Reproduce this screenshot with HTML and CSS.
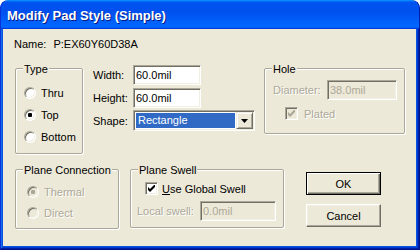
FILE: index.html
```html
<!DOCTYPE html>
<html>
<head>
<meta charset="utf-8">
<title>Modify Pad Style (Simple)</title>
<link rel="stylesheet" href="styles.css">
</head>
<body>
<div class="window">
  <div class="titlebar"><span class="title">Modify Pad Style (Simple)</span></div>
  <div class="frame">
    <div class="client">
      <div class="name-row"><span class="name-label">Name:</span><span class="name-value">P:EX60Y60D38A</span></div>

      <div class="row row-top">
        <div class="group group-type">
          <span class="legend">Type</span>
          <div class="radio-item"><span class="radio"></span><span>Thru</span></div>
          <div class="radio-item"><span class="radio checked"></span><span>Top</span></div>
          <div class="radio-item"><span class="radio"></span><span>Bottom</span></div>
        </div>

        <div class="fields">
          <div class="field field-w"><span class="field-label">Width:</span><span class="textbox tb-size">60.0mil</span></div>
          <div class="field field-h"><span class="field-label">Height:</span><span class="textbox tb-size">60.0mil</span></div>
          <div class="field"><span class="field-label">Shape:</span>
            <span class="combo">
              <span class="combo-value"><span class="combo-sel">Rectangle</span></span>
              <span class="combo-btn"><svg width="7" height="4" viewBox="0 0 7 4"><polygon points="0,0 7,0 3.5,4" fill="#000"/></svg></span>
            </span>
          </div>
        </div>

        <div class="group group-hole">
          <span class="legend">Hole</span>
          <div class="hole-row"><span class="hole-label disabled">Diameter:</span><span class="textbox tb-dia disabled-box">38.0mil</span></div>
          <div class="check-item plated"><span class="checkbox disabled-check"><svg width="7" height="7" viewBox="0 0 7 7"><path d="M0 2v3l2 2 5-5V-1L2 4z" fill="#ACA899"/></svg></span><span class="disabled">Plated</span></div>
        </div>
      </div>

      <div class="row row-bottom">
        <div class="group group-pc">
          <span class="legend">Plane Connection</span>
          <div class="radio-item"><span class="radio checked disabled-radio"></span><span class="disabled">Thermal</span></div>
          <div class="radio-item"><span class="radio disabled-radio"></span><span class="disabled">Direct</span></div>
        </div>

        <div class="group group-ps">
          <span class="legend">Plane Swell</span>
          <div class="check-item global"><span class="checkbox"><svg width="7" height="7" viewBox="0 0 7 7"><path d="M0 2v3l2 2 5-5V-1L2 4z" fill="#000"/></svg></span><span><u>U</u>se Global Swell</span></div>
          <div class="swell-row"><span class="swell-label disabled">Local swell:</span><span class="textbox tb-swell disabled-box">0.0mil</span></div>
        </div>

        <div class="buttons">
          <div class="btn btn-default"><span>OK</span></div>
          <div class="btn"><span>Cancel</span></div>
        </div>
      </div>
    </div>
  </div>
</div>
</body>
</html>
```

FILE: styles.css
```css
html, body {
  margin: 0;
  padding: 0;
  background: #fff;
}
body {
  font-family: "Liberation Sans", Arial, sans-serif;
  font-size: 11px;
  color: #000;
}
.window {
  width: 420px;
  height: 250px;
  display: flex;
  flex-direction: column;
  border-radius: 8px 8px 0 0;
  overflow: hidden;
}
.titlebar {
  flex: none;
  height: 29px;
  box-sizing: border-box;
  padding: 3px 0 0 7px;
  line-height: 26px;
  border-radius: 8px 8px 0 0;
  background: linear-gradient(180deg, #0997ff 0, #0053ee 8%, #0050ee 40%, #0066ff 88%, #0066ff 93%, #005bff 95%, #003dd7 96%, #003dd7 100%);
  box-shadow: inset 1px 0 #0831d9, inset -1px 0 #001ea0;
}
.title {
  font-weight: bold;
  font-size: 13px;
  color: #fff;
  text-shadow: 1px 1px #0a1883;
  white-space: nowrap;
}
.frame {
  flex: 1;
  display: flex;
  padding: 0 4px 4px 3px;
  background: #0855dd;
  box-shadow: inset -1px -1px #00138c, inset 1px 0 #0831d9, inset -2px -2px #001ea0, inset 2px 0 #166aee, inset -3px -3px #003bda;
}
.client {
  flex: 1;
  background: #ece9d8;
  padding-top: 9px;
}
.name-row {
  margin-left: 11px;
  height: 13px;
  line-height: 13px;
  white-space: nowrap;
}
.name-value {
  margin-left: 7px;
}
.row {
  display: flex;
  align-items: flex-start;
}
.row-top {
  margin-top: 14px;
}
.row-bottom {
  margin-top: 15px;
}

/* group boxes */
.group {
  position: relative;
  box-sizing: border-box;
  border: 1px solid #aca899;
  box-shadow: 1px 1px 0 #fff, inset 1px 1px 0 #fff;
  border-radius: 2px;
  flex: none;
}
.legend {
  position: absolute;
  top: -6px;
  left: 7px;
  padding: 0 1px;
  line-height: 13px;
  background: #ece9d8;
  white-space: nowrap;
}
.group-type {
  margin-left: 12px;
  margin-top: 3px;
  width: 68px;
  height: 86px;
  padding: 18px 0 0 8px;
}
.group-hole {
  margin-left: 9px;
  margin-top: 3px;
  width: 141px;
  height: 66px;
  padding: 11px 0 0 7px;
}
.group-pc {
  margin-left: 12px;
  width: 104px;
  height: 60px;
  padding: 16px 0 0 11px;
}
.group-ps {
  margin-left: 11px;
  width: 154px;
  height: 59px;
  padding: 12px 0 0 6px;
}

/* radios */
.radio-item {
  display: flex;
  align-items: center;
  gap: 5px;
  height: 12px;
  line-height: 13px;
  white-space: nowrap;
}
.group-type .radio-item + .radio-item {
  margin-top: 10px;
}
.group-pc .radio-item + .radio-item {
  margin-top: 9px;
}
.radio {
  position: relative;
  flex: none;
  width: 12px;
  height: 12px;
  box-sizing: border-box;
  border-radius: 50%;
  border: 1px solid;
  border-color: #aca899 #fff #fff #aca899;
  box-shadow: inset 1px 1px #716f64, inset -1px -1px #f1efe2;
  background: #fff;
}
.radio.checked::after {
  content: "";
  position: absolute;
  left: 3px;
  top: 3px;
  width: 4px;
  height: 4px;
  border-radius: 1px;
  background: #000;
}
.radio.disabled-radio {
  background: #ece9d8;
}
.radio.disabled-radio.checked::after {
  background: #aca899;
}

.disabled {
  color: #aca899;
  text-shadow: 1px 1px #fff;
}

/* fields column */
.fields {
  margin-left: 10px;
  display: flex;
  flex-direction: column;
  flex: none;
}
.field {
  display: flex;
  align-items: center;
}
.field-w {
  margin-bottom: 3px;
}
.field-h {
  margin-bottom: 2px;
}
.field-label {
  width: 40px;
  flex: none;
}
.textbox {
  display: block;
  box-sizing: border-box;
  height: 20px;
  border: 1px solid;
  border-color: #aca899 #fff #fff #aca899;
  box-shadow: inset 1px 1px #716f64, inset -1px -1px #f1efe2;
  background: #fff;
  padding: 0 2px;
  line-height: 18px;
  white-space: nowrap;
  flex: none;
}
.tb-size {
  width: 68px;
}
.disabled-box {
  background: #ece9d8;
  color: #aca899;
}
.combo {
  display: flex;
  box-sizing: border-box;
  width: 122px;
  height: 21px;
  border: 1px solid;
  border-color: #aca899 #fff #fff #aca899;
  box-shadow: inset 1px 1px #716f64, inset -1px -1px #f1efe2;
  background: #fff;
  padding: 1px;
  flex: none;
}
.combo-value {
  flex: 1;
  display: flex;
  padding: 1px 1px 1px 1px;
}
.combo-sel {
  flex: 1;
  background: #316ac5;
  color: #fff;
  line-height: 15px;
  padding-left: 2px;
}
.combo-btn {
  flex: none;
  width: 17px;
  height: 17px;
  box-sizing: border-box;
  display: flex;
  align-items: center;
  justify-content: center;
  background: #ece9d8;
  border: 1px solid;
  border-color: #f1efe2 #716f64 #716f64 #f1efe2;
  box-shadow: inset 1px 1px #fff, inset -1px -1px #aca899;
  padding-top: 1px;
}
.combo-btn svg {
  display: block;
}

/* hole group */
.hole-row {
  display: flex;
  align-items: center;
}
.hole-label {
  width: 54px;
  flex: none;
  margin-left: 1px;
}
.tb-dia {
  width: 70px;
}
.check-item {
  display: flex;
  align-items: center;
  height: 13px;
  white-space: nowrap;
}
.plated {
  margin-top: 7px;
  margin-left: 13px;
  gap: 6px;
}
.checkbox {
  flex: none;
  width: 13px;
  height: 13px;
  box-sizing: border-box;
  border: 1px solid;
  border-color: #aca899 #fff #fff #aca899;
  box-shadow: inset 1px 1px #716f64, inset -1px -1px #f1efe2;
  background: #fff;
  display: flex;
  align-items: center;
  justify-content: center;
}
.checkbox svg {
  display: block;
}
.disabled-check {
  background: #ece9d8;
}

/* plane swell */
.global {
  margin-left: 8px;
  gap: 4px;
}
.swell-row {
  display: flex;
  align-items: center;
  margin-top: 6px;
}
.swell-label {
  width: 63px;
  flex: none;
}
.tb-swell {
  width: 76px;
}

/* buttons */
.buttons {
  margin-left: 22px;
  margin-top: 3px;
  display: flex;
  flex-direction: column;
  gap: 9px;
  flex: none;
}
.btn {
  width: 75px;
  height: 23px;
  box-sizing: border-box;
  display: flex;
  align-items: center;
  justify-content: center;
  background: #ece9d8;
  border: 1px solid;
  border-color: #fff #716f64 #716f64 #fff;
  box-shadow: inset -1px -1px #aca899, inset 1px 1px #f1efe2;
}
.btn-default {
  border: 1px solid #000;
  box-shadow: inset 1px 1px #fff, inset -1px -1px #716f64, inset -2px -2px #aca899;
}
```
